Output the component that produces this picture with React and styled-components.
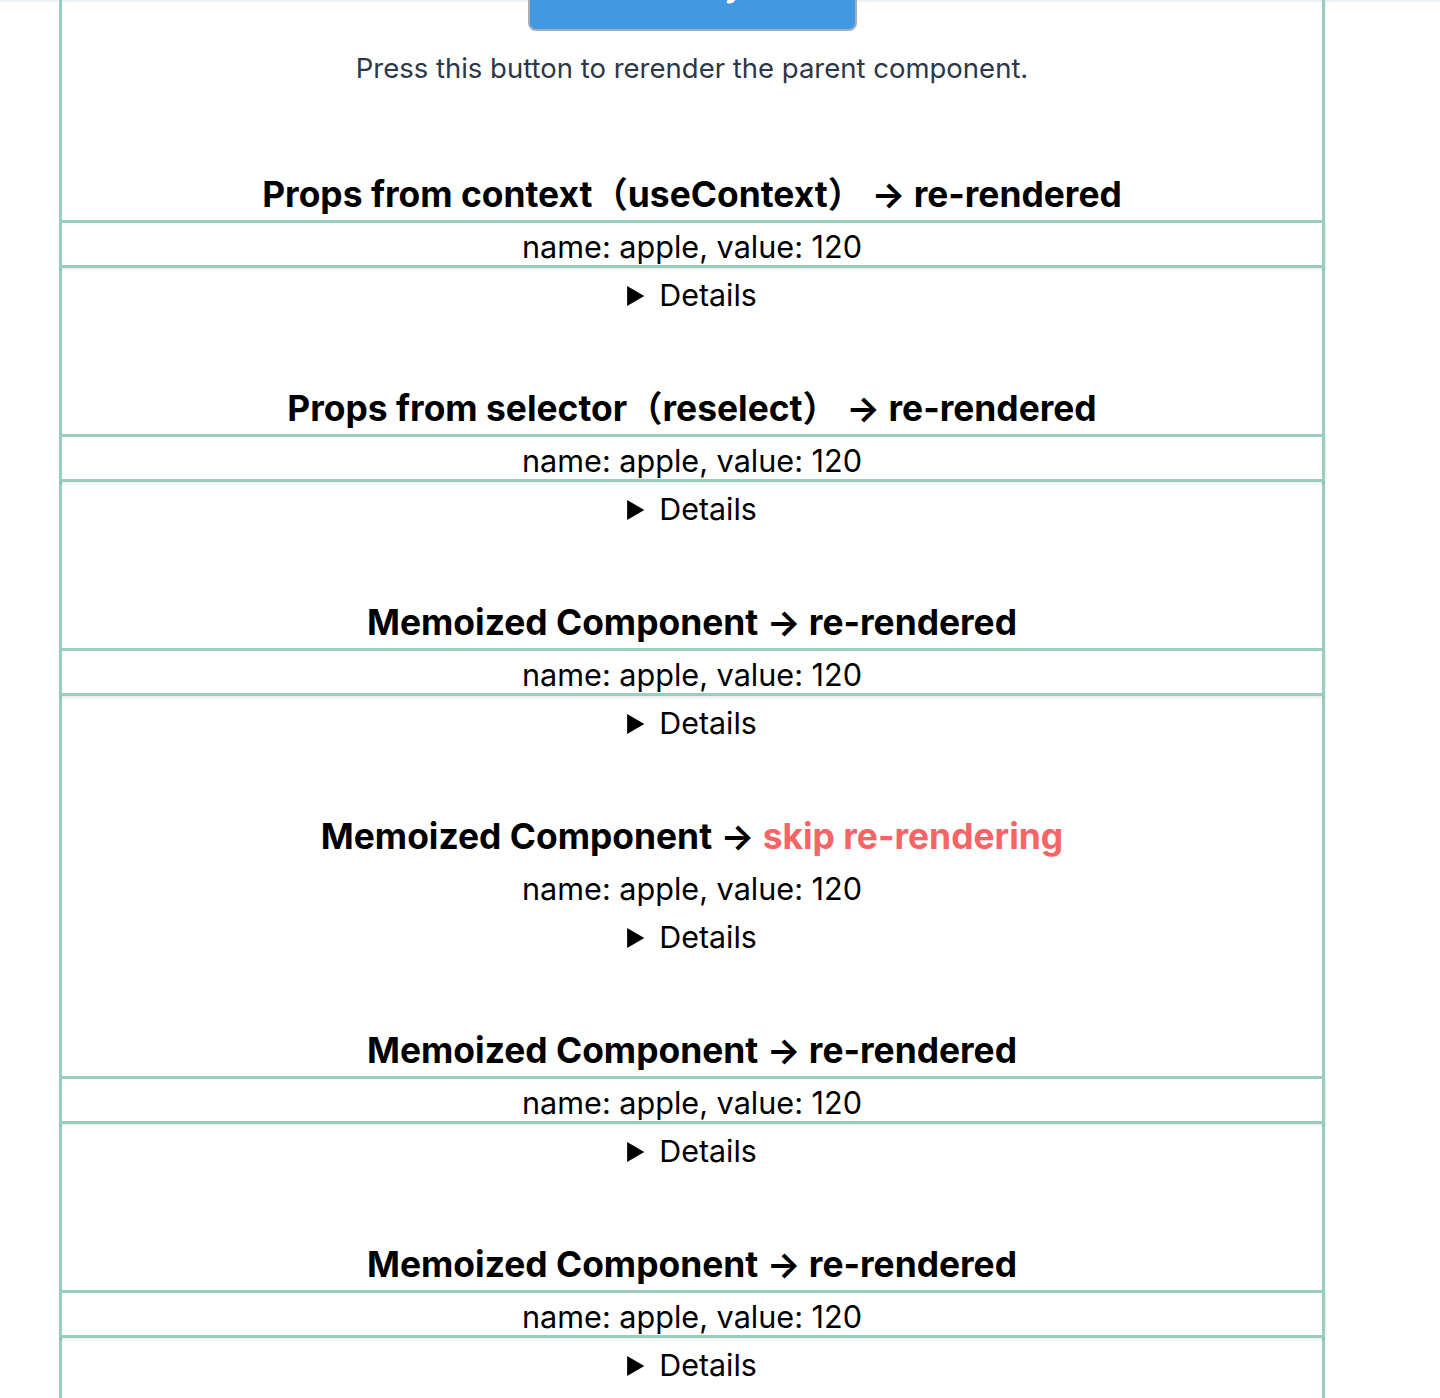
import styled, { createGlobalStyle } from "styled-components";

const GlobalStyle = createGlobalStyle`
  body {
    margin: 0;
    background: linear-gradient(#edf2f7 0 2px, #ffffff 2px);
    font-family: Inter, "Noto Sans CJK JP", sans-serif;
    color: #000;
  }
`;

const teal = "#98cdbf";

const Page = styled.main`
  padding-left: 59px;
`;

const Column = styled.div`
  box-sizing: border-box;
  width: 1266px;
  margin-top: -49px;
  padding-bottom: 76px;
  border-left: 3px solid ${teal};
  border-right: 3px solid ${teal};
  box-shadow: 1px 0 2px rgba(0, 0, 0, 0.06);
  text-align: center;
`;

const TopBlock = styled.div`
  display: flex;
  flex-direction: column;
  align-items: center;
`;

const RenderButton = styled.button`
  width: 329px;
  height: 80px;
  padding: 0 0 11px;
  background: #4299e1;
  border: 2px solid #a0aec0;
  border-radius: 8px;
  color: #fff;
  font-family: inherit;
  font-size: 30px;
  font-weight: 700;
  cursor: pointer;
`;

const Hint = styled.p`
  margin: 21px 0 15px;
  font-size: 27.5px;
  line-height: 32px;
  color: #2d3748;
`;

const Section = styled.section`
  padding-top: 76px;
`;

const Heading = styled.h2`
  margin: 0 0 5px;
  font-size: 35.4px;
  line-height: 40px;
  font-weight: 700;
`;

const Skip = styled.span`
  color: #f56565;
`;

const ValueBox = styled.div`
  box-sizing: border-box;
  height: 48px;
  margin: 0 ${(p) => (p.$flash ? "-3px" : "0")};
  border: ${(p) => (p.$flash ? `3px solid ${teal}` : "none")};
  box-shadow: ${(p) => (p.$flash ? "0 2px 3px rgba(0, 0, 0, 0.07)" : "none")};
  background: ${(p) => (p.$flash ? "#fff" : "transparent")};
  position: relative;
  font-size: 30.6px;
  line-height: ${(p) => (p.$flash ? "48px" : "54px")};
`;

const More = styled.details`
  margin-top: 9px;

  summary {
    font-size: 30.4px;
    line-height: 36px;
    cursor: pointer;
  }
`;

const items = [
  { title: "Props from context（useContext）", flash: true },
  { title: "Props from selector（reselect）", flash: true },
  { title: "Memoized Component", flash: true },
  { title: "Memoized Component", flash: false },
  { title: "Memoized Component", flash: true },
  { title: "Memoized Component", flash: true },
];

const Card = ({ title, flash }) => (
  <Section>
    <Heading>
      {title}
      {title.endsWith("）") ? " " : ""} →{" "}
      {flash ? "re-rendered" : <Skip>skip re-rendering</Skip>}
    </Heading>
    <ValueBox $flash={flash}>name: apple, value: 120</ValueBox>
    <More>
      <summary>Details</summary>
      <p>Rendered with the same props.</p>
    </More>
  </Section>
);

export default function App() {
  return (
    <>
      <GlobalStyle />
      <Page>
        <Column>
          <TopBlock>
            <RenderButton>Rerender by click</RenderButton>
            <Hint>Press this button to rerender the parent component.</Hint>
          </TopBlock>
          {items.map((it, i) => (
            <Card key={i} {...it} />
          ))}
        </Column>
      </Page>
    </>
  );
}
